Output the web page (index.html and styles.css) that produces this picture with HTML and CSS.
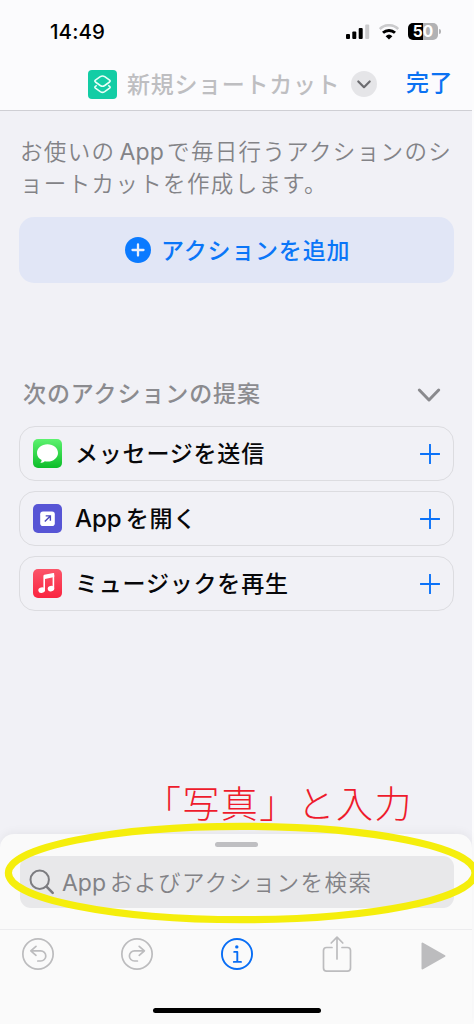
FILE: index.html
```
<!DOCTYPE html>
<html lang="ja">
<head>
<meta charset="utf-8">
<title>新規ショートカット</title>
<link rel="stylesheet" href="styles.css">
</head>
<body>
<div class="screen">
  <header class="top">
    <div class="status">
      <span class="time">14:49</span>
      <div class="indicators">
        <svg class="signal" width="24" height="16" viewBox="0 0 24 16"><rect x="0" y="10" width="4" height="5" rx="1"/><rect x="6.3" y="7.5" width="4" height="7.5" rx="1"/><rect x="12.7" y="4" width="4" height="11" rx="1"/><rect x="19.2" y="0.5" width="4" height="14.5" rx="1" fill="#cbcbcd"/></svg>
        <svg class="wifi" width="20" height="16" viewBox="0 0 20 16" fill="none"><path d="M.8 5a13.200 13.200 0 0 1 18.400 0" stroke="#cbcbcd" stroke-width="2.600"/><path d="M4 8.800a8.800 8.800 0 0 1 12 0" stroke="#000" stroke-width="2.900"/><path d="M6.600 12.200a5 5 0 0 1 6.800 0L10 15.500z" fill="#000"/></svg>
        <div class="battery"><span>50</span></div>
        <i class="nub"></i>
      </div>
    </div>
    <div class="nav">
      <svg class="app-icon" width="29" height="29" viewBox="0 0 29 29"><rect width="29" height="29" rx="4" fill="#12cda5"/><g fill="none" stroke="#e9fff8" stroke-width="1.6" stroke-linejoin="round"><path d="M8.800 15.400l-1.400.9q-1.100.9 0 1.800l4.900 3.600q2.200 1.400 4.400 0l4.900-3.600q1.100-.9 0-1.800l-1.400-.9"/><path d="M12.300 6.700q2.200-1.400 4.400 0l4.900 3.500q1.100.9 0 1.800L16.700 15.500q-2.200 1.400-4.400 0L7.400 12q-1.100-.9 0-1.800z"/></g></svg>
      <h1 class="title">新規ショートカット</h1>
      <svg class="title-more" width="26" height="26" viewBox="0 0 26 26"><circle cx="13" cy="13" r="13" fill="#e5e5e8"/><path d="M7.300 10.500L13 16.200l5.700-5.700" fill="none" stroke="#6c6c70" stroke-width="2.200" stroke-linecap="round" stroke-linejoin="round"/></svg>
      <span class="done">完了</span>
    </div>
  </header>

  <main class="content">
    <p class="desc">お使いの<span class="latin">App</span>で毎日行うアクションのシ<br>ョートカットを作成します。</p>
    <div class="add">
      <svg width="26" height="26" viewBox="0 0 26 26"><circle cx="13" cy="13" r="13" fill="#0a7aff"/><path d="M13 7.500v11M7.500 13h11" stroke="#e9effb" stroke-width="2.300" stroke-linecap="round"/></svg>
      <span>アクションを追加</span>
    </div>
    <div class="section">
      <h2>次のアクションの提案</h2>
      <svg width="24" height="16" viewBox="0 0 24 16"><path d="M2.300 3L12 13 21.700 3" fill="none" stroke="#8a8a8e" stroke-width="3" stroke-linecap="round" stroke-linejoin="round"/></svg>
    </div>
    <div class="cards">
      <div class="card">
        <svg width="29" height="29" viewBox="0 0 29 29"><defs><linearGradient id="green" x2="0" y2="1"><stop stop-color="#5df26f"/><stop offset="1" stop-color="#0cbd29"/></linearGradient></defs><rect width="29" height="29" rx="5" fill="url(#green)"/><path d="M14.500 5.200c-5.900 0-10.500 3.800-10.500 8.700 0 3 1.800 5.600 4.600 7.200.1 1.100-.5 2-1.400 2.700 1.800 0 3.500-.7 4.600-1.600.9.200 1.800.3 2.700.3 5.900 0 10.500-3.800 10.500-8.600s-4.600-8.700-10.500-8.700z" fill="#fff"/></svg>
        <span class="label">メッセージを送信</span>
        <svg class="plus" width="20" height="20" viewBox="0 0 20 20"><path d="M10 .5v19M.5 10h19"/></svg>
      </div>
      <div class="card">
        <svg width="29" height="29" viewBox="0 0 29 29"><rect width="29" height="29" rx="5" fill="#5755d5"/><rect x="7.200" y="7.500" width="14.600" height="14.600" rx="2.800" fill="#fff"/><path d="M11.800 17.600l5.300-5.400M12.700 11.900h4.700v4.800" fill="none" stroke="#4a48bd" stroke-width="1.400"/></svg>
        <span class="label"><span class="latin">App</span>を開く</span>
        <svg class="plus" width="20" height="20" viewBox="0 0 20 20"><path d="M10 .5v19M.5 10h19"/></svg>
      </div>
      <div class="card">
        <svg width="29" height="29" viewBox="0 0 29 29"><defs><linearGradient id="red" x2="0" y2="1"><stop stop-color="#fb5569"/><stop offset="1" stop-color="#fa2440"/></linearGradient></defs><rect width="29" height="29" rx="5" fill="url(#red)"/><g fill="#fff"><path d="M10.400 6.900q0-.9.900-1.100l9-1.800q.9-.2.900.8v3.300l-9.200 1.900v10.700h-1.600z"/><path d="M19.600 6h1.600v13.500h-1.600z"/><ellipse cx="8.700" cy="21.200" rx="3.400" ry="2.700" transform="rotate(-15 8.700 21.200)"/><ellipse cx="18" cy="19.600" rx="3.300" ry="2.700" transform="rotate(-15 18 19.600)"/></g></svg>
        <span class="label">ミュージックを再生</span>
        <svg class="plus" width="20" height="20" viewBox="0 0 20 20"><path d="M10 .5v19M.5 10h19"/></svg>
      </div>
    </div>
    <p class="note">「写真」と入力</p>
  </main>

  <footer class="sheet">
    <div class="grabber"></div>
    <div class="search">
      <svg width="26" height="26" viewBox="0 0 26 26" fill="none" stroke="#7c7c80" stroke-linecap="round"><circle cx="10.700" cy="10.700" r="9.200" stroke-width="2"/><path d="M17.500 17.700l6.200 6.200" stroke-width="2.600"/></svg>
      <span class="placeholder"><span class="latin">App</span>およびアクションを検索</span>
    </div>
    <div class="toolbar">
      <svg width="32" height="32" viewBox="0 0 32 32" fill="none" stroke="#bcbcbe" stroke-width="1.700" stroke-linecap="round" stroke-linejoin="round"><circle cx="16" cy="16" r="15.150"/><path d="M14 8.300L8.800 12.800l5.200 4.500M9.300 12.800h9.400a5.100 5.100 0 0 1 0 10.200h-2.900"/></svg>
      <svg width="32" height="32" viewBox="0 0 32 32" fill="none" stroke="#bcbcbe" stroke-width="1.700" stroke-linecap="round" stroke-linejoin="round"><circle cx="16" cy="16" r="15.150"/><path d="M18.200 8.300l5.200 4.500-5.200 4.500M22.900 12.800h-9.400a5.100 5.100 0 0 0 0 10.200h2.900"/></svg>
      <svg width="32" height="32" viewBox="0 0 32 32" fill="none" stroke="#096ef5" stroke-width="1.900" stroke-linecap="round" stroke-linejoin="round"><circle cx="16" cy="16" r="15.050"/><path d="M13.200 13.900h3.100v9.800M12.800 23.900h7.200"/><circle cx="15.800" cy="8.900" r="1.700" fill="#096ef5" stroke="none"/></svg>
      <svg class="share" width="30" height="38" viewBox="0 0 30 38" fill="none" stroke="#bcbcbe" stroke-width="1.700" stroke-linecap="round" stroke-linejoin="round"><path d="M10 12.500H4.600Q1.500 12.500 1.500 15.600V33q0 3.200 3.100 3.200h20.800q3.100 0 3.100-3.200V15.600q0-3.100-3.100-3.100H20M15 24V2.500M9.200 8L15 2.100 20.800 8"/></svg>
      <svg class="play" width="25" height="28" viewBox="0 0 25 28"><path d="M1.500 1.500v25L23.500 14z" fill="#bcbcbe" stroke="#bcbcbe" stroke-width="2" stroke-linejoin="round"/></svg>
    </div>
    <div class="home"></div>
  </footer>
  <svg class="ring" width="474" height="110" viewBox="0 818 474 110"><ellipse cx="241.700" cy="873" rx="233.300" ry="46.700" fill="none" stroke="#f5ee0c" stroke-width="7.200"/></svg>
</div>
</body>
</html>
```
FILE: styles.css
```
* { box-sizing: border-box; margin: 0; padding: 0; }
body { width: 474px; height: 1024px; overflow: hidden; background: #fcfcfd; font-family: "Noto Sans CJK JP", sans-serif; }
svg { display: block; flex: none; }
span, h1, h2, p { white-space: nowrap; }
.screen { position: relative; width: 472px; height: 1024px; background: #f1f1f6; display: flex; flex-direction: column; }
.latin { font-family: Inter, sans-serif; line-height: 1; }

.top { height: 111px; flex: none; background: #fbfbfd; border-bottom: 1px solid #cfcfd4; }
.status { height: 56px; display: flex; justify-content: space-between; padding: 21px 31px 0 50px; }
.time { font: 500 20.500px/22px Inter, sans-serif; letter-spacing: 0.1px; color: #000; }
.indicators { display: flex; align-items: flex-start; padding-top: 3px; }
.wifi { margin-left: 9px; }
.battery { margin: -1px 0 0 9px; width: 30px; height: 17px; border-radius: 5px; background: linear-gradient(90deg, #000 50%, #b2b2b4 50%); display: flex; justify-content: center; }
.battery span { font: 700 15.500px/17px Inter, sans-serif; color: #fff; }
.nub { width: 2px; height: 5px; margin: 5px 0 0 1px; border-radius: 0 2px 2px 0; background: #b2b2b4; }
.nav { height: 54px; display: flex; align-items: center; padding-left: 88px; }
.app-icon { margin-top: 2px; }
.title { margin-left: 10px; margin-top: -1px; width: 215px; font-size: 23px; font-weight: 500; line-height: 32px; letter-spacing: 0.700px; color: #bebec1; }
.title-more { margin-left: 9px; margin-top: 2px; }
.done { margin-left: 29px; margin-top: -4px; font-size: 23px; font-weight: 500; line-height: 32px; letter-spacing: 0.400px; color: #0b72f2; }

.content { flex: 1; padding: 23px 19px 0; }
.desc { padding-left: 1px; height: 64px; font-size: 22.500px; font-weight: 350; line-height: 32px; letter-spacing: 1.350px; color: #838387; }
.desc .latin { margin: 0 3px 0 4px; font-size: 23px; letter-spacing: 0.200px; font-weight: 400; }
.add { margin-top: 19px; width: 435px; height: 66px; border-radius: 15px; background: #e1e6f6; display: flex; align-items: center; padding-left: 106px; gap: 10px; color: #0a76f8; font-size: 23px; font-weight: 500; line-height: 32px; letter-spacing: 0.800px; }
.add span { margin-top: -3px; }
.section { margin-top: 92px; height: 36px; width: 435px; padding: 0 13px 0 4px; display: flex; align-items: center; justify-content: space-between; }
.section svg { margin-top: 3px; }
.section h2 { margin-top: -2px; font-size: 23px; font-weight: 500; line-height: 32px; letter-spacing: 0.900px; color: #8b8b8f; }
.cards { margin-top: 15px; display: flex; flex-direction: column; gap: 10px; }
.card { width: 435px; height: 55px; border: 1px solid #dcdce0; border-radius: 16px; display: flex; align-items: center; padding: 0 13px 0 13px; }
.label { flex: 1; margin-left: 13px; margin-top: -3px; font-size: 23px; font-weight: 500; line-height: 32px; letter-spacing: 0.800px; color: #08080a; }
.label .latin { font-size: 24px; font-weight: 500; margin-right: 4px; letter-spacing: 0; }
.plus { fill: none; stroke: #0b72f8; stroke-width: 1.900; stroke-linecap: round; }
.note { margin: 163px 0 0 125px; font-size: 37px; font-weight: 300; line-height: 56px; letter-spacing: 1.400px; color: #ee1b2c; }

.sheet { position: relative; height: 190px; flex: none; border-radius: 14px 14px 0 0; background: #fafafa; box-shadow: 0 -2px 10px rgba(0, 0, 0, 0.05); display: flex; flex-direction: column; align-items: flex-start; }
.grabber { margin: 8px 0 0 215px; width: 43px; height: 5px; border-radius: 3px; background: #bfbfc2; }
.search { margin: 9px 0 0 20px; width: 434px; height: 52px; border-radius: 11px; background: #e8e8ea; display: flex; align-items: center; padding-left: 9px; gap: 7px; }
.placeholder { margin-top: -3px; font-size: 22.500px; font-weight: 350; line-height: 32px; letter-spacing: 1.450px; color: #828286; }
.placeholder .latin { font-size: 23px; font-weight: 400; margin-right: 4px; letter-spacing: 0; }
.toolbar { margin-top: 21px; width: 472px; height: 50px; border-top: 1px solid #ececee; display: flex; align-items: center; justify-content: space-between; padding: 0 26px 0 22px; }
.toolbar svg { margin-top: -1px; }
.toolbar svg:nth-child(2) { margin-left: -2px; }
.toolbar svg:nth-child(3) { margin-left: -1px; }
.toolbar .share { margin: -1px 0 0 1px; }
.toolbar .play { margin-top: 3px; }
.home { margin: 29px 0 0 153px; width: 168px; height: 5px; border-radius: 3px; background: #000; }
.ring { position: absolute; left: 0; top: 818px; }
```
